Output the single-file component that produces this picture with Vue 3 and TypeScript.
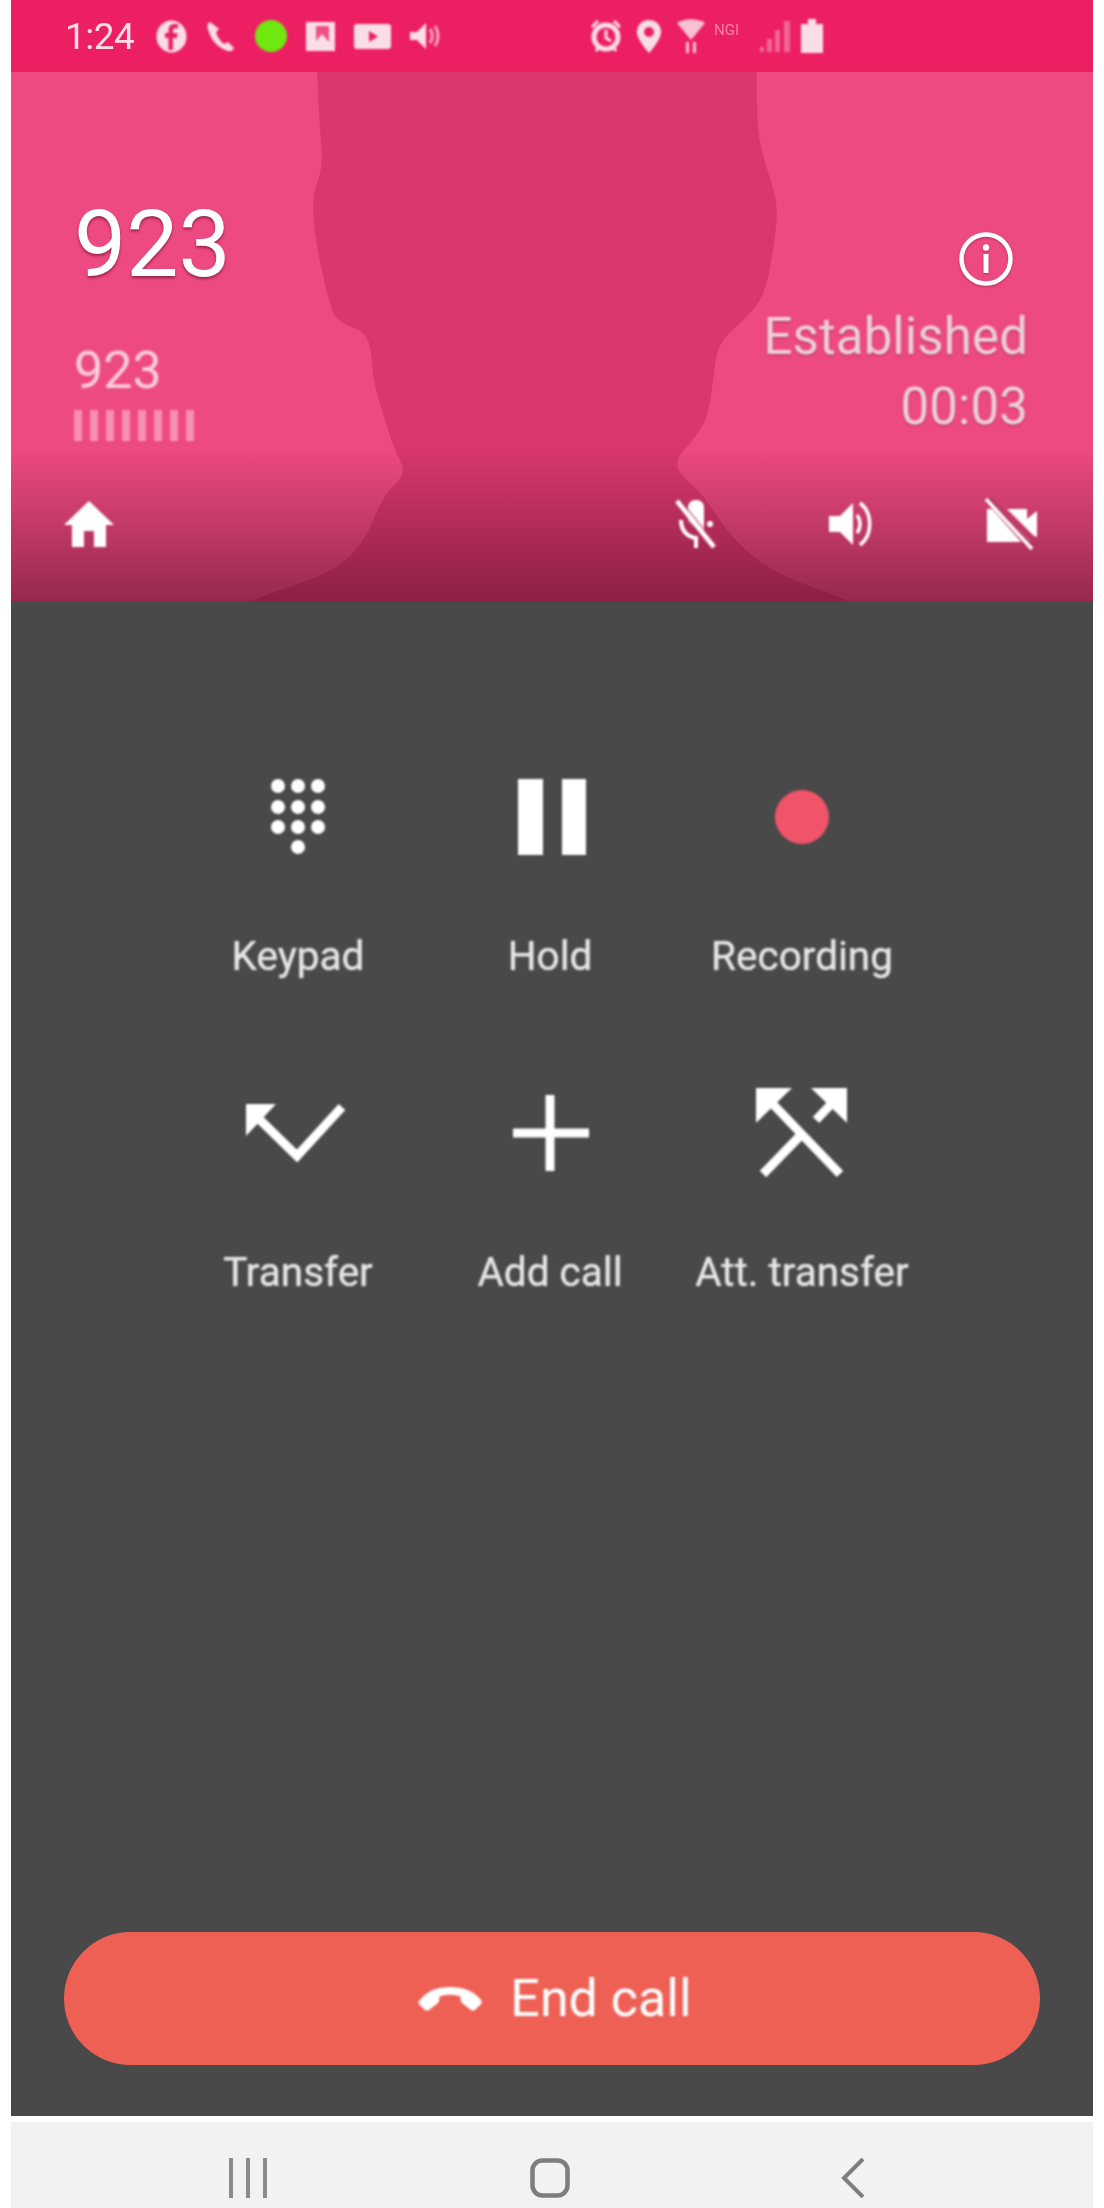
<script setup lang="ts">
interface Action {
  label: string;
}

const row1: Action[] = [{ label: 'Keypad' }, { label: 'Hold' }, { label: 'Recording' }];
const row2: Action[] = [{ label: 'Transfer' }, { label: 'Add call' }, { label: 'Att. transfer' }];
const bars = [0, 1, 2, 3, 4, 5, 6, 7];
const keypadDots = [786, 807, 827].flatMap((cy) => [279, 299, 319].map((cx) => ({ cx, cy })));

// contour of the head, smoothed through the midpoints (runs past the bottom edge, the hero clips it)
const outline: [number, number][] = [
  [317, 60], [317, 72], [320, 131], [323, 167], [312, 196], [315, 239], [329, 303], [338, 323], [370, 333],
  [373, 381], [384, 417], [394, 449], [407, 474], [384, 494], [366, 539], [335, 572], [246, 601], [170, 640],
  [930, 640], [852, 601], [775, 574], [732, 539], [704, 496], [687, 481], [673, 463], [694, 439], [708, 417],
  [713, 381], [718, 342], [748, 317], [766, 292], [775, 239], [778, 203], [766, 167], [757, 131], [757, 72], [757, 60],
];
const headPath = outline.reduce((d, p, i) => {
  if (i === 0) return `M${p[0]} ${p[1]}`;
  const next = outline[i + 1];
  if (!next) return `${d} L${p[0]} ${p[1]} Z`;
  return `${d} Q${p[0]} ${p[1]} ${(p[0] + next[0]) / 2} ${(p[1] + next[1]) / 2}`;
}, '');
</script>

<template>
  <div class="page">
    <div class="phone">
      <!-- status bar -->
      <div class="status">
        <span class="time">1:24</span>
        <div class="status-left">
          <svg width="31" height="33" viewBox="0 0 31 33"><ellipse cx="15.5" cy="16.5" rx="15" ry="16" fill="#fbdde8" /><path d="M17 30V18h4l.6-5H17v-2.500c0-1.500.6-2.200 2.200-2.200H22V4h-3.500C14.500 4 12.500 6.500 12.500 10v3H9v5h3.500v12z" fill="#ec1f63" /></svg>
          <svg width="32" height="33" viewBox="0 0 32 33"><path d="M5 2c-2 1-3 3-2 7 2 9 9 19 20 22 3 .8 5-.5 6-3l-6-6-4 2c-4-3-7-8-8-12l3-3z" fill="#fbdde8" /></svg>
          <span class="led"></span>
          <svg width="31" height="31" viewBox="0 0 31 31"><path d="M1 1h29v29H1z" fill="#fbdde8" /><path d="M11 5v15l6-7 7 8V5z" fill="#ec1f63" opacity=".75" /></svg>
          <svg width="37" height="30" viewBox="0 0 37 30"><rect y="3" width="37" height="25" rx="3" fill="#fbdde8" /><path d="M15 10l9 5.500-9 5.500z" fill="#ec1f63" /></svg>
          <svg width="31" height="32" viewBox="0 0 31 32"><path d="M1 12h7l9-9v26l-9-9H1z" fill="#fbdde8" /><path d="M21 9c3 4 3 10 0 14M26 6c4 6 4 14 0 20" fill="none" stroke="#fbdde8" stroke-width="3" opacity=".7" /></svg>
        </div>
        <div class="status-right">
          <svg width="30" height="34" viewBox="0 0 30 34"><circle cx="15" cy="18" r="12" fill="none" stroke="#fbdde8" stroke-width="5" /><path d="M15 11v8l5 3M1 8l6-6M29 8l-6-6M5 32l3-4M25 32l-3-4" fill="none" stroke="#fbdde8" stroke-width="3" /></svg>
          <svg width="26" height="35" viewBox="0 0 26 35"><path d="M13 1C6 1 1 6 1 13c0 8 12 21 12 21s12-13 12-21C25 6 20 1 13 1z" fill="#fbdde8" /><circle cx="13" cy="13" r="5" fill="#ec1f63" /></svg>
          <svg width="28" height="35" viewBox="0 0 28 35"><path d="M0 4c8-5 20-5 28 0L14 21z" fill="#f9c0d4" /><path d="M9 23h3v11H9zM16 23h3v11h-3z" fill="#f9c0d4" /></svg>
          <span class="net">NGI</span>
          <svg class="signal" width="33" height="34" viewBox="0 0 33 34"><path d="M1 33h4v-5H1zM8 33h5V20H8zM16 33h5V11h-5zM25 33h6V2h-6z" fill="#f58db0" /></svg>
          <svg class="batt" width="22" height="34" viewBox="0 0 22 34"><path d="M7 0h8v5h7v29H0V5h7z" fill="#fbdde8" /></svg>
        </div>
      </div>

      <!-- caller header -->
      <div class="hero">
        <svg class="silhouette" viewBox="11 72 1082 529" preserveAspectRatio="none">
          <path :d="headPath" fill="#d9376e" />
        </svg>
        <div class="hero-info">
          <div class="who">
            <div class="name">923</div>
            <div class="number">923</div>
            <div class="bars">
              <span v-for="b in bars" :key="b" class="bar"></span>
            </div>
          </div>
          <div class="state">
            <svg class="info" width="54" height="54" viewBox="0 0 54 54">
              <circle cx="27" cy="27" r="24.500" fill="none" stroke="#fff" stroke-width="4.500" />
              <circle cx="27" cy="15.500" r="3.200" fill="#fff" />
              <rect x="24.500" y="22" width="5" height="19" fill="#fff" />
            </svg>
            <div class="state-text">Established</div>
            <div class="state-text">00:03</div>
          </div>
        </div>
        <div class="toolbar">
          <svg class="home" width="50" height="46" viewBox="0 0 50 46"><path d="M25 0L0 24h8v22h12V30h10v16h12V24h8z" fill="#fff" /></svg>
          <svg width="50" height="52" viewBox="0 0 50 52">
            <path d="M25 2c-5 0-8 3-8 8v13l15 14c1-2 1-4 1-6V10c0-5-3-8-8-8z" fill="#fff" />
            <path d="M10 22c0 10 6 17 15 18v10" fill="none" stroke="#fff" stroke-width="4" />
            <circle cx="39" cy="26" r="3" fill="#fff" />
            <path d="M6 3l37 46" stroke="#b13a63" stroke-width="8" opacity=".6" />
            <path d="M6 3l37 46" stroke="#fff" stroke-width="4.500" />
          </svg>
          <svg width="50" height="50" viewBox="0 0 50 50">
            <path d="M1 17h11L25 4v42L12 33H1z" fill="#fff" />
            <path d="M29 16c4 5 4 13 0 18" fill="none" stroke="#fff" stroke-width="3.500" />
            <path d="M32 4c13 10 13 32 0 42" fill="none" stroke="#fff" stroke-width="3.500" />
          </svg>
          <svg width="52" height="52" viewBox="0 0 52 52">
            <path d="M2 11h13l30 32c-1 1-2 1-3 1H2zM22 11h20v10l10-8v26l-3-1z" fill="#fff" />
            <path d="M3 1l44 50" stroke="#b13a63" stroke-width="7" />
            <path d="M1 1l46 50" stroke="#fff" stroke-width="3.500" />
          </svg>
        </div>
      </div>

      <!-- call actions -->
      <div class="panel">
        <div class="actions">
          <div class="action">
            <svg class="ico" width="80" height="80" viewBox="259 777 80 80">
              <circle v-for="d in keypadDots" :key="d.cx + '-' + d.cy" :cx="d.cx" :cy="d.cy" r="7" fill="#fff" />
              <circle cx="299" cy="847" r="7" fill="#fff" />
            </svg>
            <div class="label">{{ row1[0].label }}</div>
          </div>
          <div class="action">
            <svg class="ico" width="80" height="80" viewBox="509 777 80 80">
              <rect x="517" y="779" width="25" height="76" fill="#fff" />
              <rect x="561" y="779" width="24" height="76" fill="#fff" />
            </svg>
            <div class="label">{{ row1[1].label }}</div>
          </div>
          <div class="action">
            <svg class="ico" width="80" height="80" viewBox="763 777 80 80">
              <circle cx="803" cy="817" r="27" fill="#f0546a" />
            </svg>
            <div class="label">{{ row1[2].label }}</div>
          </div>
        </div>
        <div class="actions second">
          <div class="action">
            <svg class="ico" width="110" height="80" viewBox="244 1093 110 80">
              <path d="M343 1107L298 1156L256 1115" fill="none" stroke="#fff" stroke-width="9" />
              <path d="M247 1104H277L247 1136Z" fill="#fff" />
            </svg>
            <div class="label">{{ row2[0].label }}</div>
          </div>
          <div class="action">
            <svg class="ico" width="80" height="80" viewBox="509 1093 80 80">
              <path d="M512 1133H588M549 1095V1171" fill="none" stroke="#fff" stroke-width="9" />
            </svg>
            <div class="label">{{ row2[1].label }}</div>
          </div>
          <div class="action">
            <svg class="ico" width="110" height="80" viewBox="748 1093 110 80">
              <path d="M841 1174L767 1097" fill="none" stroke="#fff" stroke-width="9" />
              <path d="M757 1088H793L757 1123Z" fill="#fff" />
              <path d="M764 1174L800 1137M817 1120L838 1098" fill="none" stroke="#fff" stroke-width="9" />
              <path d="M848 1088H812L848 1123Z" fill="#fff" />
            </svg>
            <div class="label">{{ row2[2].label }}</div>
          </div>
        </div>

        <div class="end-call">
          <svg width="65" height="26" viewBox="0 0 65 26">
            <path d="M2 14C10 4 20 1 32 1s23 3 31 13c1 2 1 3 0 4l-6 6c-2 1-3 1-4 0l-9-7c-1-1-2-4-1-6-6-3-16-3-22 0 1 2 0 5-1 6l-9 7c-1 1-2 1-4 0l-6-6c-1-1-1-2 1-4z" fill="#fff" />
          </svg>
          <span>End call</span>
        </div>
      </div>

      <!-- android nav bar -->
      <div class="nav">
        <svg width="40" height="40" viewBox="0 0 40 40"><path d="M3 0v40M20 0v40M37 0v40" stroke="#8a8a8a" stroke-width="4" /></svg>
        <svg class="nav-home" width="40" height="40" viewBox="0 0 40 40"><rect x="2.500" y="2.500" width="35" height="35" rx="10" fill="none" stroke="#7e7e7e" stroke-width="4.500" /></svg>
        <svg width="26" height="40" viewBox="0 0 26 40"><path d="M23 1L4 20l19 19" fill="none" stroke="#7e7e7e" stroke-width="4" /></svg>
      </div>
    </div>
  </div>
</template>

<style>
html,
body {
  margin: 0;
  background: #fff;
}
</style>

<style scoped>
.page {
  width: 1104px;
  height: 2208px;
  padding: 0 11px;
  box-sizing: border-box;
  background: #fff;
  font-family: Roboto, "Liberation Sans", sans-serif;
  overflow: hidden;
}

.phone {
  height: 100%;
  display: flex;
  flex-direction: column;
}

.status {
  height: 72px;
  flex: none;
  display: flex;
  align-items: center;
  padding-left: 54px;
  box-sizing: border-box;
  background: #ec1f63;
  color: #fbdde8;
}

.status svg,
.status .led {
  filter: blur(1px);
}

.time {
  width: 72px;
  margin-right: 19px;
  font-size: 37px;
  letter-spacing: -0.5px;
  white-space: nowrap;
  filter: blur(0.7px);
}

.status-left {
  display: flex;
  align-items: center;
  gap: 18px;
}

.led {
  width: 32px;
  height: 32px;
  border-radius: 50%;
  background: #6fe80f;
}

.status-right {
  display: flex;
  align-items: center;
  gap: 15px;
  margin-left: 151px;
}

.net {
  width: 39px;
  margin-left: -6px;
  font-size: 15px;
  opacity: 0.5;
  align-self: flex-start;
  padding-top: 2px;
  filter: blur(0.7px);
}

.signal {
  margin-left: -9px;
  opacity: 0.65;
}

.batt {
  margin-left: -6px;
}

.hero {
  position: relative;
  height: 529px;
  flex: none;
  display: flex;
  flex-direction: column;
  justify-content: space-between;
  background: #ee4a82;
  overflow: hidden;
}

.silhouette {
  position: absolute;
  left: 0;
  top: 0;
  width: 100%;
  height: 100%;
}

.hero-info {
  position: relative;
  display: flex;
  justify-content: space-between;
  padding: 123px 65px 0 63px;
}

.name {
  font-size: 93px;
  line-height: 100px;
  color: #fff;
  text-shadow: 0 2px 3px rgba(90, 10, 40, 0.6);
  filter: blur(0.6px);
}

.number {
  margin-top: 46px;
  font-size: 52px;
  line-height: 60px;
  color: rgba(255, 255, 255, 0.72);
  filter: blur(0.8px);
}

.bars {
  display: flex;
  gap: 8px;
  margin-top: 9px;
  height: 31px;
  filter: blur(0.8px);
}

.bar {
  width: 8px;
  background: #f68fb3;
}

.state {
  display: flex;
  flex-direction: column;
  align-items: flex-end;
  padding-top: 37px;
}

.info {
  margin-right: 15px;
  margin-bottom: 21px;
  filter: blur(0.6px) drop-shadow(0 1px 1px rgba(90, 10, 40, 0.4));
}

.state-text {
  font-size: 51px;
  line-height: 60px;
  margin-bottom: 10px;
  letter-spacing: 0.1px;
  color: rgba(255, 255, 255, 0.78);
  text-shadow: 0 1px 2px rgba(90, 10, 40, 0.5);
  white-space: nowrap;
  filter: blur(0.8px);
}

.toolbar {
  position: relative;
  height: 160px;
  display: flex;
  align-items: center;
  gap: 107px;
  padding: 0 56px 0 53px;
  background: linear-gradient(rgba(70, 10, 30, 0), rgba(70, 10, 30, 0.52));
}

.toolbar svg {
  filter: blur(0.8px);
}

.home {
  margin-right: auto;
}

.panel {
  flex: 1;
  display: flex;
  flex-direction: column;
  background: #494949;
  padding-top: 176px;
}

.actions {
  display: grid;
  grid-template-columns: repeat(3, 252px);
  margin-left: 161px;
}

.second {
  margin-top: 113px;
}

.action {
  display: flex;
  flex-direction: column;
  align-items: center;
}

.ico {
  height: 80px;
  filter: blur(0.9px);
  overflow: visible;
}

.label {
  margin-top: 75px;
  font-size: 40.500px;
  line-height: 48px;
  color: #e6e6e6;
  white-space: nowrap;
  text-shadow: 0 0 1px #e6e6e6;
  filter: blur(0.8px);
}

.end-call {
  margin: auto 53px 51px 53px;
  height: 133px;
  padding-left: 6px;
  border-radius: 67px;
  background: #ee5f54;
  display: flex;
  align-items: center;
  justify-content: center;
  gap: 27px;
  color: #fff;
  font-size: 52px;
}

.end-call svg,
.end-call span {
  filter: blur(0.8px);
}

.nav {
  height: 92px;
  flex: none;
  box-sizing: border-box;
  padding: 36px 227px 10px 217px;
  border-top: 6px solid #fff;
  display: flex;
  justify-content: space-between;
  background: #f2f2f2;
}

.nav svg {
  filter: blur(0.7px);
}

.nav-home {
  margin-left: -8px;
}
</style>
